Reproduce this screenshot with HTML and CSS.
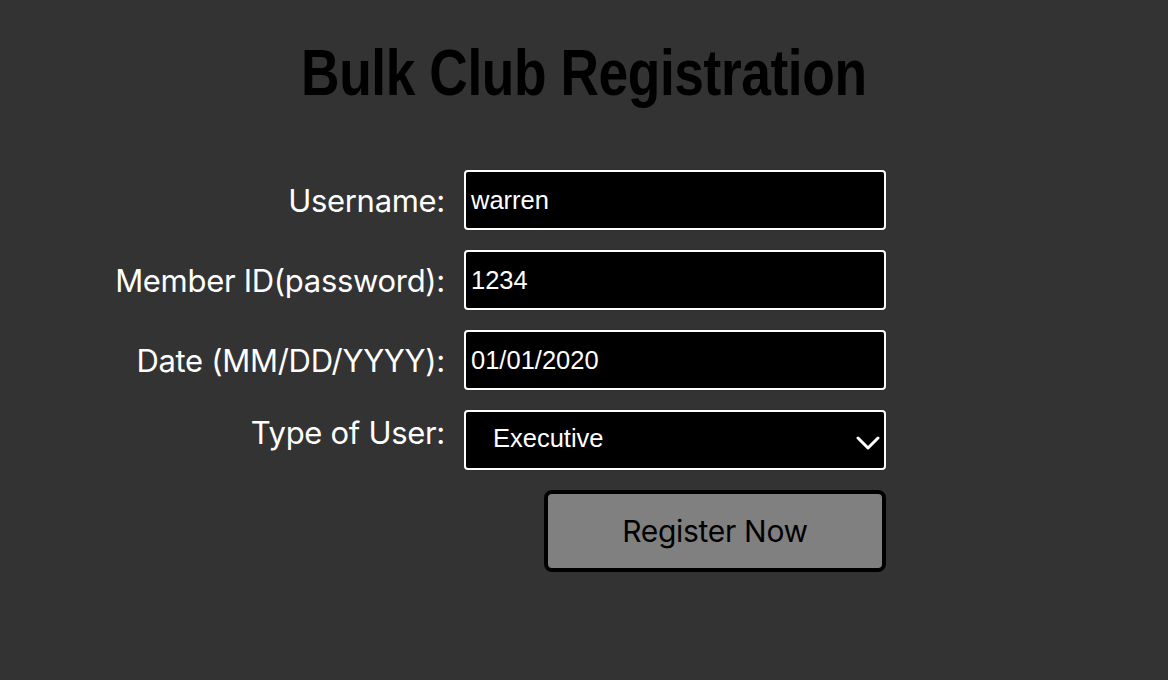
FILE: index.html
```html
<!DOCTYPE html>
<html>
<head>
<meta charset="utf-8">
<link rel="stylesheet" href="styles.css">
</head>
<body>
<h1 class="title"><span class="title-text">Bulk Club Registration</span></h1>
<form class="form">
  <label class="label" for="u">Username:</label>
  <input class="field" id="u" type="text" value="warren">
  <label class="label" for="p">Member ID(password):</label>
  <input class="field" id="p" type="text" value="1234">
  <label class="label" for="d">Date (MM/DD/YYYY):</label>
  <input class="field" id="d" type="text" value="01/01/2020">
  <label class="label label-select" for="t">Type of User:</label>
  <div class="select-wrap">
    <select class="field select" id="t">
      <option>Executive</option>
      <option>Regular</option>
    </select>
    <svg class="chev" width="24" height="14" viewBox="0 0 24 14"><path d="M2 2 L12 12 L22 2" fill="none" stroke="#fff" stroke-width="3" stroke-linecap="round" stroke-linejoin="round"/></svg>
  </div>
  <div></div>
  <div class="btn-row"><button type="button" class="btn">Register Now</button></div>
</form>
</body>
</html>
```
FILE: styles.css
```css
html, body {
  margin: 0;
  padding: 0;
  background: #333333;
  height: 100%;
}
body {
  font-family: Inter, "Noto Sans", sans-serif;
}
.title {
  margin: 0;
  padding-top: 36px;
  text-align: center;
  font-family: "Liberation Sans", Arial, sans-serif;
  font-weight: bold;
  font-size: 65px;
  line-height: 74px;
  color: #000;
}
.title-text {
  display: inline-block;
  transform: scaleX(0.82);
  letter-spacing: -0.5px;
}
.form {
  display: grid;
  grid-template-columns: 445px 422px;
  column-gap: 19px;
  row-gap: 20px;
  margin-top: 60px;
}
.label {
  justify-self: end;
  align-self: center;
  color: #fff;
  font-size: 31px;
  letter-spacing: -0.3px;
}
.label-select {
  align-self: start;
  margin-top: 4px;
}
.field {
  box-sizing: border-box;
  width: 422px;
  height: 60px;
  margin: 0;
  background: #000;
  color: #fff;
  border: 2px solid #fff;
  border-radius: 4px;
  font-family: "Liberation Sans", Arial, sans-serif;
  font-size: 25.5px;
  padding: 0 5px;
  outline: none;
}
.select-wrap {
  position: relative;
  width: 422px;
  height: 60px;
}
.select {
  -webkit-appearance: none;
  appearance: none;
  padding: 0 0 4px 27px;
}
.chev {
  position: absolute;
  right: 6px;
  top: 26px;
}
.btn-row {
  display: flex;
  justify-content: flex-end;
}
.btn {
  box-sizing: border-box;
  width: 342px;
  height: 82px;
  background: #808080;
  border: 4px solid #000;
  border-radius: 8px;
  color: #000;
  font-family: Inter, "Noto Sans", sans-serif;
  font-size: 30px;
  letter-spacing: -0.3px;
  padding: 0;
}
```
